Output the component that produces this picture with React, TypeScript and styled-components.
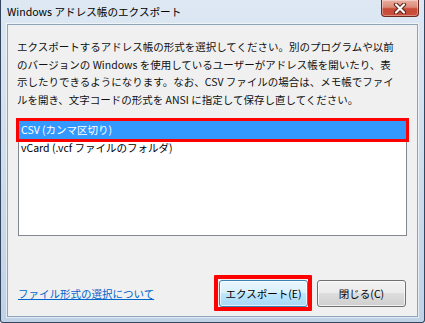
import React from "react";
import styled, { createGlobalStyle } from "styled-components";

const GlobalStyle = createGlobalStyle`
  html, body { margin: 0; padding: 0; background: #ffffff; }
  body { font-family: "Noto Sans CJK JP", "Noto Sans", sans-serif; }
`;

const FONT = `"Noto Sans CJK JP", "Noto Sans", sans-serif`;

const Window = styled.div`
  width: 425px;
  height: 323px;
  box-sizing: border-box;
  border: 1px solid #34465e;
  border-top: 0;
  border-radius: 0 0 3px 3px;
  padding: 0 6px 5px 6px;
  display: flex;
  flex-direction: column;
  background: linear-gradient(180deg, #dde8f3 0%, #d2e0ee 40%, #bfd2e6 100%);
  font-family: ${FONT};
  color: #000;
`;

const TitleBar = styled.div`
  height: 24px;
  flex: none;
  display: flex;
  align-items: flex-start;
  justify-content: space-between;
`;

const Title = styled.div`
  font-size: 10.6px;
  line-height: 14px;
  padding-top: 5px;
  white-space: nowrap;
  color: #000;
`;

const CloseButton = styled.div`
  width: 38px;
  height: 17px;
  margin-right: -1px;
  box-sizing: border-box;
  border: 1px solid #6b2a20;
  border-top: 0;
  border-radius: 0 0 4px 4px;
  background: linear-gradient(180deg, #eab0a2 0%, #dc8a78 45%, #c84a36 55%, #c9503c 100%);
  box-shadow: inset 0 0 0 1px rgba(255, 255, 255, 0.35);
  display: flex;
  align-items: center;
  justify-content: center;
`;

const Client = styled.div`
  flex: 1;
  box-sizing: border-box;
  border: 1px solid #8fa4ba;
  box-shadow: 0 0 0 1px rgba(255, 255, 255, 0.55);
  background: #f0f0f0;
  padding: 13px 9px 9px 9px;
  display: flex;
  flex-direction: column;
  min-height: 0;
`;

const Intro = styled.p`
  margin: 0;
  font-size: 10.5px;
  line-height: 17.5px;
  white-space: nowrap;
  color: #111;
`;

const IntroLine = styled.span`
  display: block;
`;

const ListBox = styled.div`
  margin: 12px 1px 0 1px;
  height: 116px;
  box-sizing: border-box;
  border: 1px solid #828790;
  background: #ffffff;
  display: flex;
  flex-direction: column;
`;

const ListItem = styled.div<{ $selected?: boolean }>`
  height: 18px;
  line-height: 18px;
  padding-left: 2px;
  font-size: 10.5px;
  white-space: nowrap;
  background: ${(p) => (p.$selected ? "#3399ff" : "transparent")};
  color: ${(p) => (p.$selected ? "#ffffff" : "#000000")};
  outline: ${(p) => (p.$selected ? "3px solid #ff0000" : "none")};
  outline-offset: 0;
`;

const Footer = styled.div`
  margin-top: auto;
  display: flex;
  align-items: center;
  justify-content: space-between;
`;

const HelpLink = styled.a`
  margin-left: 1px;
  font-size: 10.5px;
  color: #0066cc;
  text-decoration: underline;
  white-space: nowrap;
`;

const ButtonGroup = styled.div`
  display: flex;
  gap: 9px;
  margin-right: 2px;
`;

const Button = styled.div<{ $default?: boolean }>`
  position: relative;
  width: 89px;
  height: 27px;
  box-sizing: border-box;
  border-radius: 3px;
  border: 1px solid ${(p) => (p.$default ? "#3c7fb1" : "#707070")};
  background: ${(p) =>
    p.$default
      ? "linear-gradient(180deg, #eaf6fd 0%, #d9f0fc 49%, #bee6fd 50%, #a7d9f5 100%)"
      : "linear-gradient(180deg, #f2f2f2 0%, #ebebeb 49%, #dddddd 50%, #cfcfcf 100%)"};
  box-shadow: inset 0 0 0 1px rgba(255, 255, 255, 0.7);
  display: flex;
  align-items: center;
  justify-content: center;
  font-size: 10.5px;
  white-space: nowrap;
`;

const Marker = styled.span`
  position: absolute;
  left: -6px;
  top: -6px;
  right: -5px;
  bottom: -5px;
  border: 4px solid #ff0000;
  border-radius: 1px;
  pointer-events: none;
`;

const lines = [
  "エクスポートするアドレス帳の形式を選択してください。別のプログラムや以前",
  "のバージョンの Windows を使用しているユーザーがアドレス帳を開いたり、表",
  "示したりできるようになります。なお、CSV ファイルの場合は、メモ帳でファイ",
  "ルを開き、文字コードの形式を ANSI に指定して保存し直してください。",
];

export default function App() {
  return (
    <>
      <GlobalStyle />
      <Window>
        <TitleBar>
          <Title>Windows アドレス帳のエクスポート</Title>
          <CloseButton>
            <svg width="14" height="11" viewBox="0 0 14 11">
              <path d="M3 1.5 L11 9.5 M11 1.5 L3 9.5" stroke="#5b2015" strokeWidth="4.2" strokeLinecap="round" fill="none" />
              <path d="M3 1.5 L11 9.5 M11 1.5 L3 9.5" stroke="#ffffff" strokeWidth="2.2" strokeLinecap="round" fill="none" />
            </svg>
          </CloseButton>
        </TitleBar>
        <Client>
          <Intro>
            {lines.map((l) => (
              <IntroLine key={l}>{l}</IntroLine>
            ))}
          </Intro>
          <ListBox>
            <ListItem $selected>CSV (カンマ区切り)</ListItem>
            <ListItem>vCard (.vcf ファイルのフォルダ)</ListItem>
          </ListBox>
          <Footer>
            <HelpLink href="#">ファイル形式の選択について</HelpLink>
            <ButtonGroup>
              <Button $default>
                エクスポート(E)
                <Marker />
              </Button>
              <Button>閉じる(C)</Button>
            </ButtonGroup>
          </Footer>
        </Client>
      </Window>
    </>
  );
}
